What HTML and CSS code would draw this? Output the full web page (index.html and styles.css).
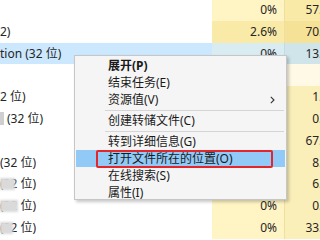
FILE: index.html
```html
<!DOCTYPE html>
<html>
<head>
<meta charset="utf-8">
<link rel="stylesheet" href="styles.css">
</head>
<body>
<div class="screen">
  <div class="table">
    <div class="row"><div class="name"></div><div class="cpu">0%</div><div class="mem m-dk"><span>57.3 MB</span></div></div>
    <div class="row"><div class="name">2)</div><div class="cpu c-dk">2.6%</div><div class="mem m-dk2"><span>70.9 MB</span></div></div>
    <div class="row sel"><div class="name">tion (32 位)</div><div class="cpu">0%</div><div class="mem"><span>13.3 MB</span></div></div>
    <div class="row"><div class="name"></div><div class="cpu"></div><div class="mem m-lt"><span></span></div></div>
    <div class="row"><div class="name">2 位)</div><div class="cpu"></div><div class="mem"><span>1.2 MB</span></div></div>
    <div class="row"><div class="name"><i class="ico"></i>(32 位)</div><div class="cpu"></div><div class="mem"><span>0.7 MB</span></div></div>
    <div class="row"><div class="name"></div><div class="cpu"></div><div class="mem"><span>67.8 MB</span></div></div>
    <div class="row"><div class="name">(32 位)</div><div class="cpu"></div><div class="mem"><span>8.6 MB</span></div></div>
    <div class="row"><div class="name">(32 位)<i class="mask w15"></i></div><div class="cpu"></div><div class="mem"><span>6.5 MB</span></div></div>
    <div class="row"><div class="name">(32 位)<i class="mask w18"></i></div><div class="cpu">0%</div><div class="mem"><span>0.8 MB</span></div></div>
    <div class="row"><div class="name">(32 位)<i class="mask w13"></i></div><div class="cpu">0%</div><div class="mem"><span>33.7 MB</span></div></div>
  </div>

  <div class="menu">
    <div class="item bold">展开(P)</div>
    <div class="item">结束任务(E)</div>
    <div class="item">资源值(V)<svg class="arrow" width="5" height="8" viewBox="0 0 5 8"><polyline points="0.8,0.8 4,4 0.8,7.2" fill="none" stroke="#333" stroke-width="1.1"/></svg></div>
    <div class="sep"></div>
    <div class="item">创建转储文件(C)</div>
    <div class="sep"></div>
    <div class="item">转到详细信息(G)</div>
    <div class="item hot">打开文件所在的位置(O)</div>
    <div class="item">在线搜索(S)</div>
    <div class="item">属性(I)</div>
    <div class="redbox"></div>
  </div>
</div>
</body>
</html>
```
FILE: styles.css
```css
html, body {
  margin: 0;
  padding: 0;
  overflow: hidden;
}
body {
  width: 320px;
  height: 240px;
  background: #ffffff;
  font-family: "Noto Sans", "Noto Sans CJK SC", sans-serif;
  font-size: 12px;
  color: #262626;
}
.screen {
  position: relative;
  width: 320px;
  height: 240px;
  overflow: hidden;
}
.table {
  margin-top: -1px;
  display: flex;
  flex-direction: column;
}
.row {
  display: grid;
  grid-template-columns: 212px 72px 36px;
  height: 21.8px;
  line-height: 21.8px;
  white-space: nowrap;
}
.name {
  position: relative;
  display: flex;
  align-items: center;
  overflow: hidden;
}
.cpu {
  background: #fff4c4;
  text-align: right;
  padding-right: 7px;
}
.c-dk { background: #f9eaa8; }
.mem {
  background: #fbefb9;
  border-left: 1px solid #efdfa2;
  overflow: hidden;
}
.mem span {
  display: block;
  width: 66px;
  text-align: right;
}
.m-dk { background: #f9eaa8; }
.m-dk2 { background: #f6e296; }
.m-lt { background: #fff9e6; }
.sel .name { background: #cce8ff; }
.sel .cpu { background: #d9ecf1; }
.sel .mem { background: #d0e5ea; border-left-color: #c4dbe2; }

.ico {
  display: inline-block;
  width: 4px;
  height: 13px;
  background: #cfcfcf;
  margin-right: 3px;
}
.mask {
  position: absolute;
  left: 0;
  top: 5px;
  height: 12px;
  background: #dadada;
  filter: blur(1px);
}
.w15 { width: 15px; }
.w18 { width: 18px; }
.w13 { width: 13px; }

.menu {
  position: absolute;
  left: 74px;
  top: 55px;
  width: 213px;
  height: 145px;
  box-sizing: border-box;
  border: 1px solid #c6c6c6;
  background: #f5f5f5;
  box-shadow: 2px 2px 3px rgba(0, 0, 0, 0.22);
  padding-top: 1px;
  color: #1a1a1a;
}
.item {
  display: flex;
  align-items: center;
  height: 17px;
  line-height: 17px;
  margin: 0 1px;
  padding-left: 32px;
  white-space: nowrap;
}
.bold { font-weight: bold; }
.hot { background: #91c9f7; }
.arrow {
  margin-left: auto;
  margin-right: 10px;
}
.sep {
  height: 1px;
  background: #d5d5d5;
  margin: 2px 2px 1px 30px;
}
.redbox {
  position: absolute;
  left: 21px;
  top: 94px;
  width: 177px;
  height: 18px;
  box-sizing: border-box;
  border: 2px solid #e3262b;
  border-radius: 2px;
}
```
